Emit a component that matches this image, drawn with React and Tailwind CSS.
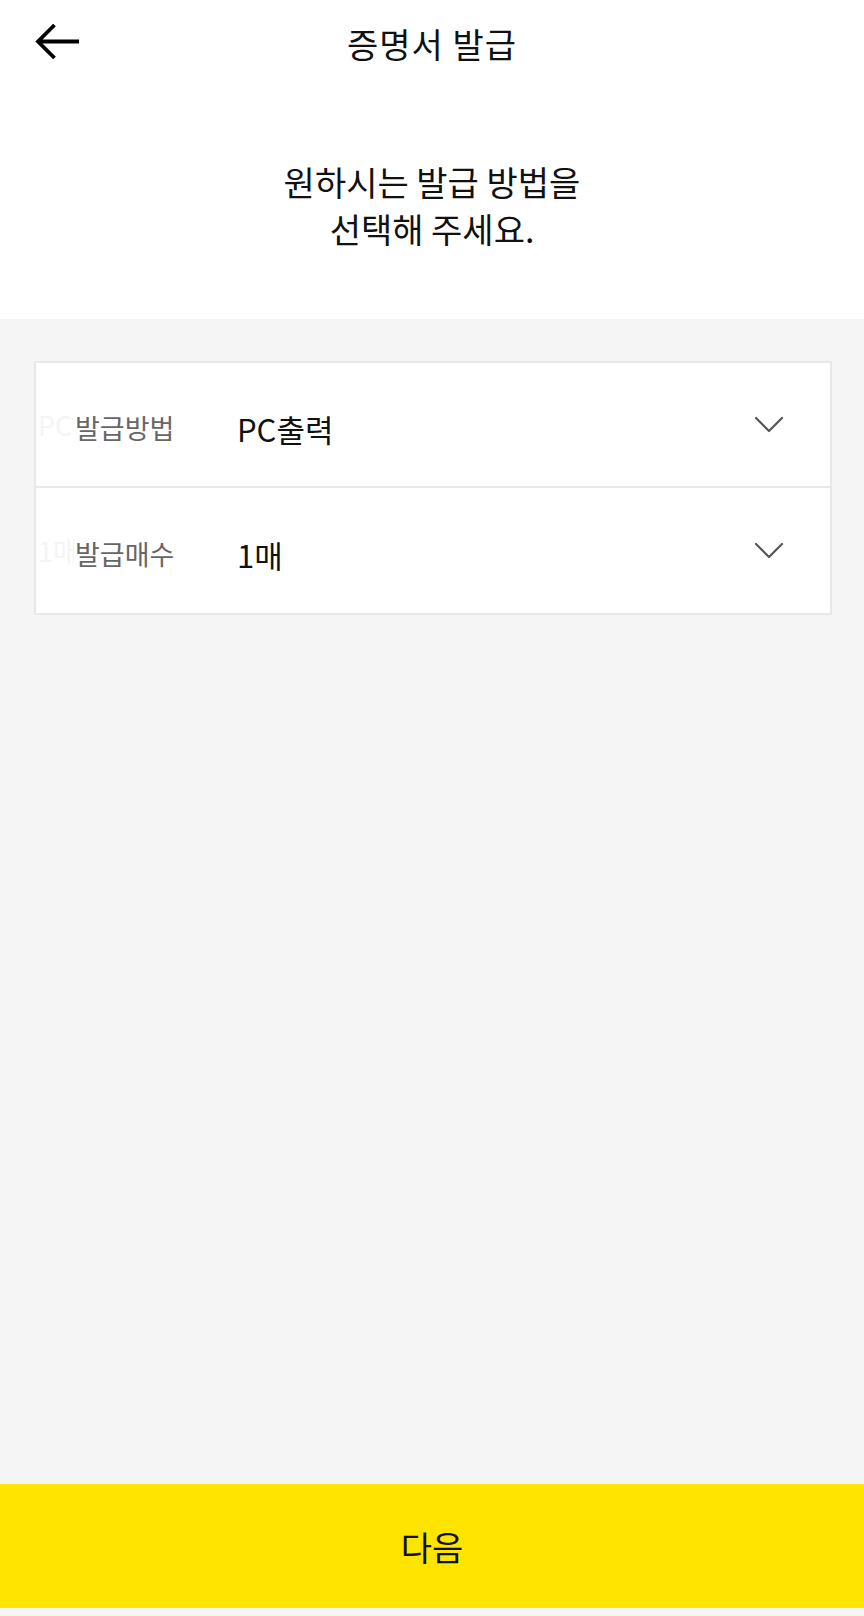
import React from 'react';

const font = { fontFamily: '"Noto Sans CJK KR", "Noto Sans", sans-serif' };

const Chevron = () => (
  <svg width="30" height="18" viewBox="0 0 30 18" fill="none" className="shrink-0">
    <path d="M2 2 L15 15 L28 2" stroke="#555" strokeWidth="2.2" strokeLinecap="round" strokeLinejoin="round" />
  </svg>
);

const SelectRow = ({ label, value, ghost, last }) => (
  <div className={`relative flex items-center h-[125px] pl-[39px] pr-[46px] bg-white ${last ? '' : 'border-b-2 border-[#e8e8e8]'}`}>
    <span className="absolute left-[2px] top-1/2 -translate-y-1/2 w-[36px] overflow-hidden whitespace-nowrap text-[27px] text-[#f4f4f4]">{ghost}</span>
    <span className="w-[162px] shrink-0 text-[27px] text-[#666] bg-white leading-none pt-[6px]">{label}</span>
    <span className="flex-1 text-[31px] text-[#111] leading-none pt-[8px]">{value}</span>
    <Chevron />
  </div>
);

const App = () => {
  return (
    <div className="w-[864px] min-h-[1616px] flex flex-col bg-[#f5f5f5]" style={font}>
      <div className="bg-white">
        <header className="relative h-[84px] flex items-center justify-center">
          <button className="absolute left-[34px] top-[22px]">
            <svg width="46" height="40" viewBox="0 0 46 40" fill="none">
              <path d="M45 19.5 H4 M20.5 3 L4 19.5 L20.5 36" stroke="#000" strokeWidth="3.8" strokeLinejoin="miter" />
            </svg>
          </button>
          <h1 className="text-[34px] text-[#111] tracking-[1px] pt-[2px]">증명서 발급</h1>
        </header>
        <div className="pt-[74px] pb-[67px] text-center text-[34px] leading-[47px] text-[#111]">
          <p>원하시는 발급 방법을</p>
          <p>선택해 주세요.</p>
        </div>
      </div>

      <div className="flex-1 pt-[42px] pl-[34px] pr-[32px]">
        <div className="border-2 border-[#e8e8e8] bg-white">
          <SelectRow label="발급방법" value="PC출력" ghost="PC출력" />
          <SelectRow label="발급매수" value="1매" ghost="1매" last />
        </div>
      </div>

      <button className="h-[124px] w-full bg-[#ffe400] flex items-center justify-center text-[34px] text-[#111]">
        다음
      </button>
      <div className="h-[8px] bg-[#f5f5f5]" />
    </div>
  );
};

export default App;
